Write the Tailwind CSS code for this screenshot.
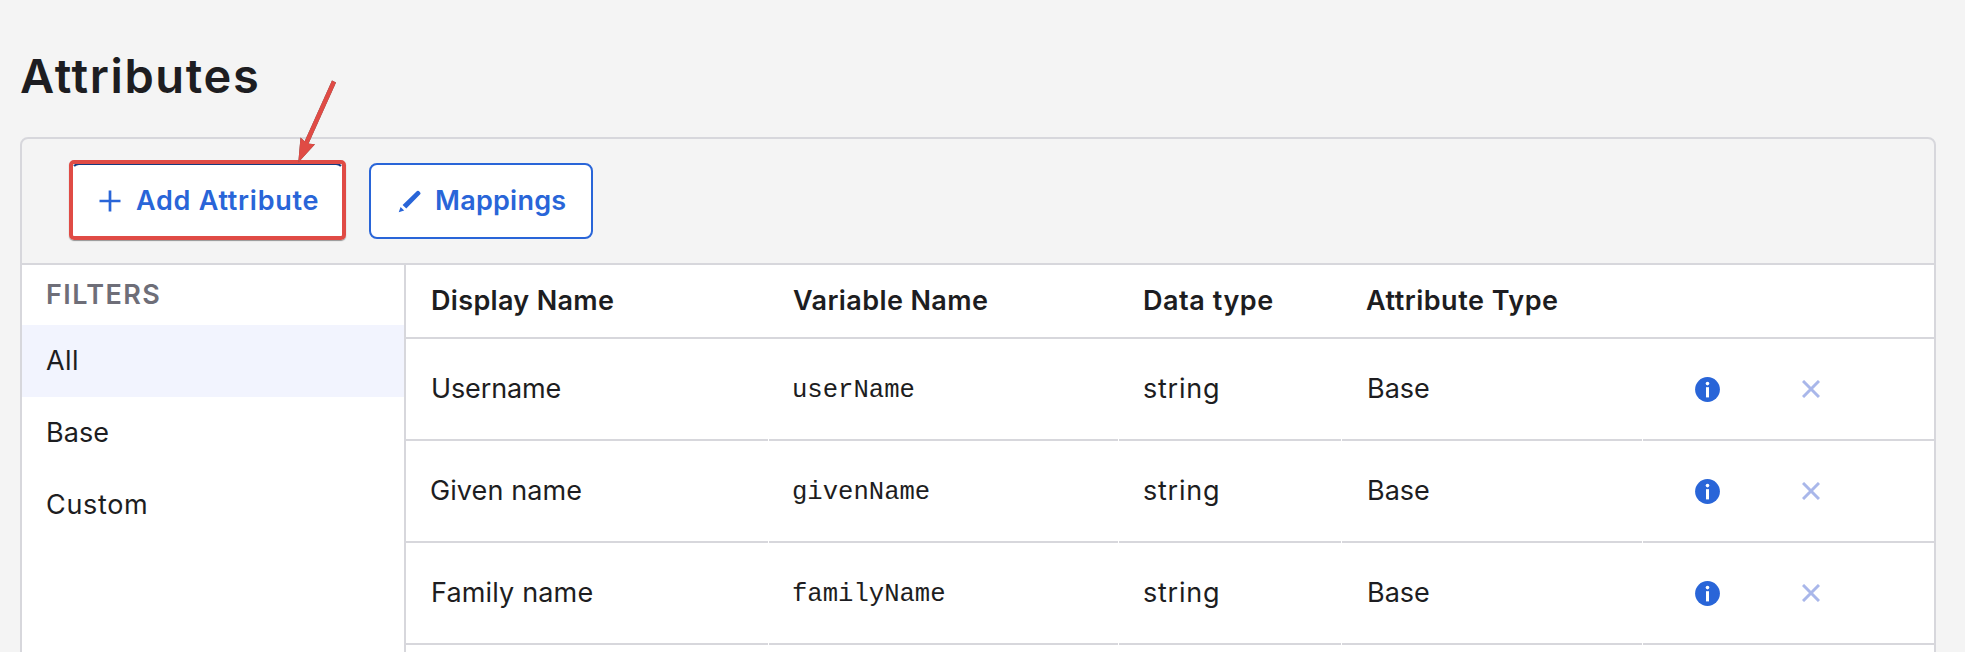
<!DOCTYPE html>
<html lang="en">
<head>
<meta charset="utf-8">
<title>Attributes</title>
<script src="https://cdn.jsdelivr.net/npm/@tailwindcss/browser@4"></script>
</head>
<body class="relative h-[652px] overflow-hidden bg-[#f4f4f4] px-5 font-['Inter','Liberation_Sans',sans-serif] text-[27px] text-[#1d1d21]">
<svg class="hidden">
  <symbol id="info" viewBox="0 0 25 25"><circle cx="12.5" cy="12.5" r="12.4" fill="#2965d8"/><circle cx="12.5" cy="6.6" r="1.8" fill="#fff"/><rect x="11" y="10.2" width="3" height="10.2" fill="#fff"/></symbol>
  <symbol id="cross" viewBox="0 0 18 18"><path d="M1 1 17 17M17 1 1 17" stroke="#a9b7ea" stroke-width="3"/></symbol>
</svg>

<h1 class="flex h-[137px] items-center pt-[13px] text-[47px] leading-none font-semibold tracking-[1.64px]">Attributes</h1>

<main class="mr-[9px] flex h-[530px] flex-col rounded-t-lg border-2 border-[#d7d7dc]">
  <div class="flex h-[126px] shrink-0 items-start gap-[25px] border-b-2 border-[#d7d7dc] pt-6 pl-[49px]">
    <button class="relative flex h-[76px] w-[273px] items-center rounded-lg border-2 border-t-[#173a80] border-x-transparent border-b-transparent bg-white pl-[26px] font-semibold text-[#2965d8]">
      <svg class="h-[22px] w-[22px]" viewBox="0 0 22 22"><path d="M11 .5v21M.5 11h21" stroke="#2965d8" stroke-width="2.7"/></svg>
      <span class="ml-[15px] whitespace-nowrap tracking-[.74px]">Add Attribute</span>
      <span class="absolute -top-[5px] -right-[4px] -left-[4px] h-[80px] rounded-[5px] border-4 border-[#e04b45] shadow-[0_1px_1px_#55555599]"></span>
    </button>
    <button class="flex h-[76px] w-[224px] items-center rounded-lg border-2 border-[#2965d8] bg-white pl-[27px] font-semibold text-[#2965d8]">
      <svg class="h-[23px] w-[23px]" viewBox="0 0 23 23" fill="#2965d8"><path d="M4.6 14.9 19 1.1Q20 .3 20.9 1.1L22.2 2.4Q23 3.4 22.2 4.3L8.3 18.6ZM2.6 17 6.2 20.4.7 22.3Z"/></svg>
      <span class="ml-[14px] tracking-[.25px]">Mappings</span>
    </button>
  </div>

  <div class="flex min-h-0 flex-1 bg-white">
    <aside class="w-[384px] shrink-0 border-r-2 border-[#d7d7dc]">
      <div class="flex h-[60px] items-center pl-6 font-semibold tracking-[1.4px] text-[#6e6e78]">FILTERS</div>
      <div class="flex h-[72px] items-center bg-[#f2f4fe] pl-6 tracking-[.4px]">All</div>
      <div class="flex h-[72px] items-center pl-6 tracking-[.07px]">Base</div>
      <div class="flex h-[72px] items-center pl-6 tracking-[.66px]">Custom</div>
    </aside>

    <section class="min-w-0 flex-1">
      <div class="flex h-[74px] items-center border-b-2 border-[#d7d7dc] font-semibold whitespace-nowrap">
        <div class="w-[363px] pl-[25px] tracking-[.33px]">Display Name</div>
        <div class="w-[350px] pl-[24px] tracking-[.4px]">Variable Name</div>
        <div class="w-[223px] pl-[24px] tracking-[.55px]">Data type</div>
        <div class="pl-[24px] tracking-[.5px]">Attribute Type</div>
      </div>

      <div class="flex h-[102px] gap-px whitespace-nowrap *:flex *:items-center *:border-b-2 *:border-[#d7d7dc]">
        <div class="w-[362px] pl-[25px] tracking-[-.13px]">Username</div>
        <div class="w-[349px] pt-[4px] pl-[23px] font-['Liberation_Mono',monospace] text-[25.6px]">userName</div>
        <div class="w-[222px] pl-[24px] tracking-[.77px]">string</div>
        <div class="w-[300px] pl-[25px]">Base</div>
        <div class="flex-1 pl-[52px]"><svg class="h-[25px] w-[25px]"><use href="#info"/></svg><svg class="ml-[82px] h-[18px] w-[18px]"><use href="#cross"/></svg></div>
      </div>
      <div class="flex h-[102px] gap-px whitespace-nowrap *:flex *:items-center *:border-b-2 *:border-[#d7d7dc]">
        <div class="w-[362px] pl-[24px] tracking-[.09px]">Given name</div>
        <div class="w-[349px] pt-[4px] pl-[23px] font-['Liberation_Mono',monospace] text-[25.6px]">givenName</div>
        <div class="w-[222px] pl-[24px] tracking-[.77px]">string</div>
        <div class="w-[300px] pl-[25px]">Base</div>
        <div class="flex-1 pl-[52px]"><svg class="h-[25px] w-[25px]"><use href="#info"/></svg><svg class="ml-[82px] h-[18px] w-[18px]"><use href="#cross"/></svg></div>
      </div>
      <div class="flex h-[102px] gap-px whitespace-nowrap *:flex *:items-center *:border-b-2 *:border-[#d7d7dc]">
        <div class="w-[362px] pl-[25px] tracking-[.16px]">Family name</div>
        <div class="w-[349px] pt-[4px] pl-[23px] font-['Liberation_Mono',monospace] text-[25.6px]">familyName</div>
        <div class="w-[222px] pl-[24px] tracking-[.77px]">string</div>
        <div class="w-[300px] pl-[25px]">Base</div>
        <div class="flex-1 pl-[52px]"><svg class="h-[25px] w-[25px]"><use href="#info"/></svg><svg class="ml-[82px] h-[18px] w-[18px]"><use href="#cross"/></svg></div>
      </div>
    </section>
  </div>
</main>

<svg class="absolute top-[76px] left-[290px] h-[92px] w-[52px] drop-shadow-[0_0_.5px_#555]" viewBox="290 76 52 92"><path d="M334 81.5 305 146" stroke="#e04b45" stroke-width="4.4"/><path d="M298.3 162.5 300.5 137.5 307 143.5 315 144.2Z" fill="#e04b45"/></svg>
</body>
</html>
